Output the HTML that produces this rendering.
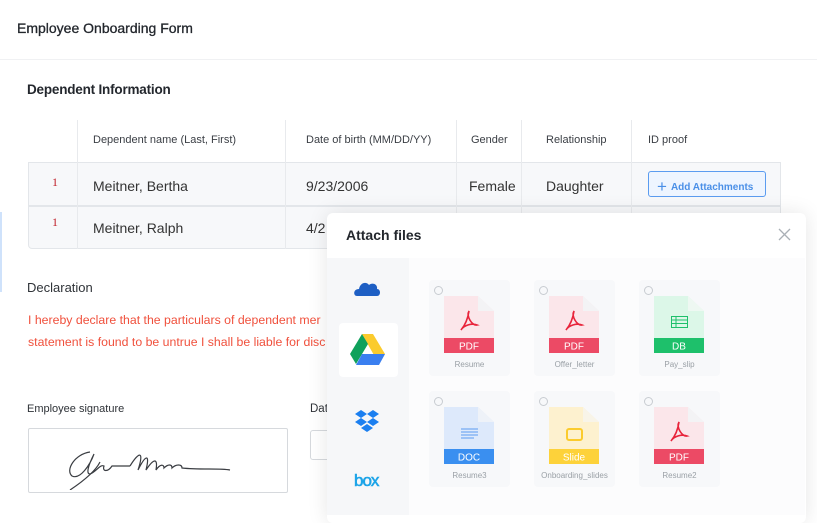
<!DOCTYPE html>
<html><head><meta charset="utf-8"><style>
*{box-sizing:border-box;margin:0;padding:0}
body{width:817px;height:515px;overflow:hidden;background:#fff;font-family:"Liberation Sans",sans-serif;color:#2f3338;position:relative}
.a{position:absolute}
.hdr{left:0;top:0;width:817px;height:60px;background:#fff;border-bottom:1px solid #f0f1f3}
.t{white-space:nowrap}
.cell{position:absolute;font-size:14px;color:#333}
.th{position:absolute;font-size:11px;color:#3a3e44}
.card{position:absolute;width:81px;height:96px;background:#f7f8fa;border-radius:4px}
.card .r{position:absolute;left:5px;top:6px;width:9px;height:9px;border:1px solid #c8ccd1;border-radius:50%}
.card .f{position:absolute;left:15px;top:16px;width:50px;height:57px}
.card .n{position:absolute;left:0;width:81px;top:80px;text-align:center;font-size:8px;color:#9aa0a6}
</style></head><body>
<div class="a hdr"></div>
<div class="a t" style="left:17px;top:20px;font-size:14px;color:#23272d;-webkit-text-stroke:0.3px #23272d">Employee Onboarding Form</div>
<div class="a t" style="left:27px;top:82px;font-size:13.5px;font-weight:bold;color:#23272d;letter-spacing:-0.2px">Dependent Information</div>

<!-- table -->
<div class="a" style="left:28px;top:162px;width:753px;height:87px;background:#f7f8fa;border:1px solid #e3e6ea;border-radius:0 0 4px 4px"></div>
<div class="a" style="left:28px;top:205px;width:753px;height:2px;background:#e3e6ea"></div>
<div class="a" style="left:77px;top:120px;width:1px;height:129px;background:#e8eaed"></div>
<div class="a" style="left:285px;top:120px;width:1px;height:129px;background:#e8eaed"></div>
<div class="a" style="left:456px;top:120px;width:1px;height:129px;background:#e8eaed"></div>
<div class="a" style="left:521px;top:120px;width:1px;height:129px;background:#e8eaed"></div>
<div class="a" style="left:631px;top:120px;width:1px;height:129px;background:#e8eaed"></div>
<div class="th t" style="left:93px;top:134px">Dependent name (Last, First)</div>
<div class="th t" style="left:306px;top:134px">Date of birth (MM/DD/YY)</div>
<div class="th t" style="left:471px;top:134px">Gender</div>
<div class="th t" style="left:546px;top:134px">Relationship</div>
<div class="th t" style="left:648px;top:134px">ID proof</div>
<div class="a t" style="left:52px;top:175px;font-size:12px;font-family:'Liberation Serif',serif;color:#c0202a">1</div>
<div class="a t" style="left:52px;top:215px;font-size:12px;font-family:'Liberation Serif',serif;color:#c0202a">1</div>
<div class="cell t" style="left:93px;top:178px">Meitner, Bertha</div>
<div class="cell t" style="left:306px;top:178px">9/23/2006</div>
<div class="cell t" style="left:469px;top:178px">Female</div>
<div class="cell t" style="left:546px;top:178px">Daughter</div>
<div class="cell t" style="left:93px;top:220px">Meitner, Ralph</div>
<div class="cell t" style="left:306px;top:220px">4/2</div>
<div class="a t" style="left:648px;top:171px;width:118px;height:26px;border:1px solid #5b9cf0;border-radius:3px;background:#eef5ff;color:#4a8fe7;font-size:10px;font-weight:bold;padding:5px 0 0 8px"><span style="font-size:17px;font-weight:normal;vertical-align:-2px;margin-right:4px">+</span>Add Attachments</div>

<div class="a" style="left:0;top:212px;width:2px;height:80px;background:#cfe2fb"></div>

<div class="a t" style="left:27px;top:280px;font-size:13px;color:#2f3338">Declaration</div>
<div class="a t" style="left:28px;top:313px;font-size:12.3px;color:#f0503c">I hereby declare that the particulars of dependent mer</div>
<div class="a t" style="left:28px;top:335px;font-size:12.3px;color:#f0503c">statement is found to be untrue I shall be liable for disc</div>
<div class="a t" style="left:27px;top:403px;font-size:11px;color:#2f3338">Employee signature</div>
<div class="a t" style="left:310px;top:403px;font-size:11.5px;color:#2f3338">Dat</div>
<div class="a" style="left:28px;top:428px;width:260px;height:65px;border:1px solid #d6d9dd;border-radius:2px"></div>
<div class="a" style="left:310px;top:430px;width:30px;height:30px;border:1px solid #d6d9dd;border-radius:3px"></div>
<svg class="a" style="left:60px;top:440px" width="180" height="50" viewBox="0 0 180 50"><path d="M30 12 C15 14 5 30 12 36 C20 40 30 25 34 14 C28 26 26 34 30 34 C36 32 40 24 44 26 C42 32 48 32 52 26 L70 26 M40 22 C35 32 22 42 10 50 M70 26 C80 10 84 12 78 30 C86 14 90 14 86 30 C94 18 98 18 96 30 C100 24 104 24 104 28 C108 24 112 24 112 28 C116 24 122 24 122 28 C140 30 160 28 170 30" stroke="#3a3d42" stroke-width="1.2" fill="none"/></svg>

<!-- modal -->
<div class="a" style="left:327px;top:213px;width:479px;height:310px;background:#fff;border-radius:6px;box-shadow:0 0 20px rgba(0,0,0,0.10)"></div>
<div class="a t" style="left:346px;top:227px;font-size:14px;font-weight:bold;color:#23272d">Attach files</div>
<svg class="a" style="left:778px;top:228px" width="13" height="13"><path d="M1 1L12 12M12 1L1 12" stroke="#aab0b6" stroke-width="1.3"/></svg>
<div class="a" style="left:327px;top:258px;width:82px;height:257px;background:#f6f7f9"></div>
<div class="a" style="left:409px;top:258px;width:396px;height:257px;background:#fcfcfd"></div>
<svg class="a" style="left:354px;top:279px" width="27" height="18" viewBox="0 0 27 18"><path d="M3 17 C-1 17 -1 10 5 10 C6 4 12 2 15 6 C18 3 24 5 23 10 C27 10 27 17 23 17Z" fill="#1e5fc4"/></svg>
<div class="a" style="left:339px;top:323px;width:59px;height:54px;background:#fff;border-radius:4px"></div>
<svg class="a" style="left:350px;top:334px" width="35" height="31" viewBox="0 0 35 31"><path d="M12 0 L23 0 L35 20 L29 30Z" fill="#fbcb2d"/><path d="M12 0 L18 10 L6 30 L0 20Z" fill="#0fa15b"/><path d="M6 31 L12 20 L35 20 L29 31Z" fill="#3a7ff0"/></svg>
<svg class="a" style="left:354px;top:410px" width="26" height="25" viewBox="0 0 26 25"><g fill="#1b7ff0"><path d="M7 0L13 4L7 8L1 4Z"/><path d="M19 0L25 4L19 8L13 4Z"/><path d="M1 12L7 8L13 12L7 16Z"/><path d="M13 12L19 8L25 12L19 16Z"/><path d="M7 18L13 14L19 18L13 22Z"/></g></svg>
<div class="a t" style="left:354px;top:471px;font-size:17px;color:#1ca4e8;letter-spacing:-1px;-webkit-text-stroke:0.6px #1ca4e8">box</div>

<!-- cards -->
<div class="card" style="left:429px;top:280px"><div class="r"></div><svg class="f" viewBox="0 0 50 57"><path d="M0 0H34L50 15V42H0Z" fill="#fbe6ea"/><path d="M34 0V15H50Z" fill="#f3f3f5"/><rect y="42" width="50" height="15" fill="#ec4a65"/><text x="25" y="53.5" font-size="10" fill="#fff" text-anchor="middle" font-family="Liberation Sans">PDF</text><path d="M25 15 C22 20 28 30 33 29 C28 27 20 29 17 34 C22 28 24 22 25 15Z" stroke="#e8243b" stroke-width="1.6" fill="none"/></svg><div class="n">Resume</div></div>
<div class="card" style="left:534px;top:280px"><div class="r"></div><svg class="f" viewBox="0 0 50 57"><path d="M0 0H34L50 15V42H0Z" fill="#fbe6ea"/><path d="M34 0V15H50Z" fill="#f3f3f5"/><rect y="42" width="50" height="15" fill="#ec4a65"/><text x="25" y="53.5" font-size="10" fill="#fff" text-anchor="middle" font-family="Liberation Sans">PDF</text><path d="M25 15 C22 20 28 30 33 29 C28 27 20 29 17 34 C22 28 24 22 25 15Z" stroke="#e8243b" stroke-width="1.6" fill="none"/></svg><div class="n">Offer_letter</div></div>
<div class="card" style="left:639px;top:280px"><div class="r"></div><svg class="f" viewBox="0 0 50 57"><path d="M0 0H34L50 15V42H0Z" fill="#dcf7e8"/><path d="M34 0V15H50Z" fill="#eef8f2"/><rect y="42" width="50" height="15" fill="#1ec06b"/><text x="25" y="53.5" font-size="10" fill="#fff" text-anchor="middle" font-family="Liberation Sans">DB</text><rect x="17.5" y="20.5" width="16" height="11" stroke="#1ec06b" fill="none"/><path d="M17.5 24H33.5M17.5 27.5H33.5M22 20.5V31.5" stroke="#1ec06b"/></svg><div class="n">Pay_slip</div></div>
<div class="card" style="left:429px;top:391px"><div class="r"></div><svg class="f" viewBox="0 0 50 57"><path d="M0 0H34L50 15V42H0Z" fill="#dde9fb"/><path d="M34 0V15H50Z" fill="#eef2f8"/><rect y="42" width="50" height="15" fill="#3a8ff0"/><text x="25" y="53.5" font-size="10" fill="#fff" text-anchor="middle" font-family="Liberation Sans">DOC</text><path d="M17 22H34M17 25H34M17 28H34M17 31H30" stroke="#5b9cf0"/></svg><div class="n">Resume3</div></div>
<div class="card" style="left:534px;top:391px"><div class="r"></div><svg class="f" viewBox="0 0 50 57"><path d="M0 0H34L50 15V42H0Z" fill="#fdf1cf"/><path d="M34 0V15H50Z" fill="#f8f4e8"/><rect y="42" width="50" height="15" fill="#fdd23a"/><text x="25" y="53.5" font-size="10" fill="#fff" text-anchor="middle" font-family="Liberation Sans">Slide</text><rect x="18" y="22" width="15" height="11" rx="2" stroke="#fbcb2d" stroke-width="2" fill="#fdf1cf"/></svg><div class="n">Onboarding_slides</div></div>
<div class="card" style="left:639px;top:391px"><div class="r"></div><svg class="f" viewBox="0 0 50 57"><path d="M0 0H34L50 15V42H0Z" fill="#fbe6ea"/><path d="M34 0V15H50Z" fill="#f3f3f5"/><rect y="42" width="50" height="15" fill="#ec4a65"/><text x="25" y="53.5" font-size="10" fill="#fff" text-anchor="middle" font-family="Liberation Sans">PDF</text><path d="M25 15 C22 20 28 30 33 29 C28 27 20 29 17 34 C22 28 24 22 25 15Z" stroke="#e8243b" stroke-width="1.6" fill="none"/></svg><div class="n">Resume2</div></div>
</body></html>
